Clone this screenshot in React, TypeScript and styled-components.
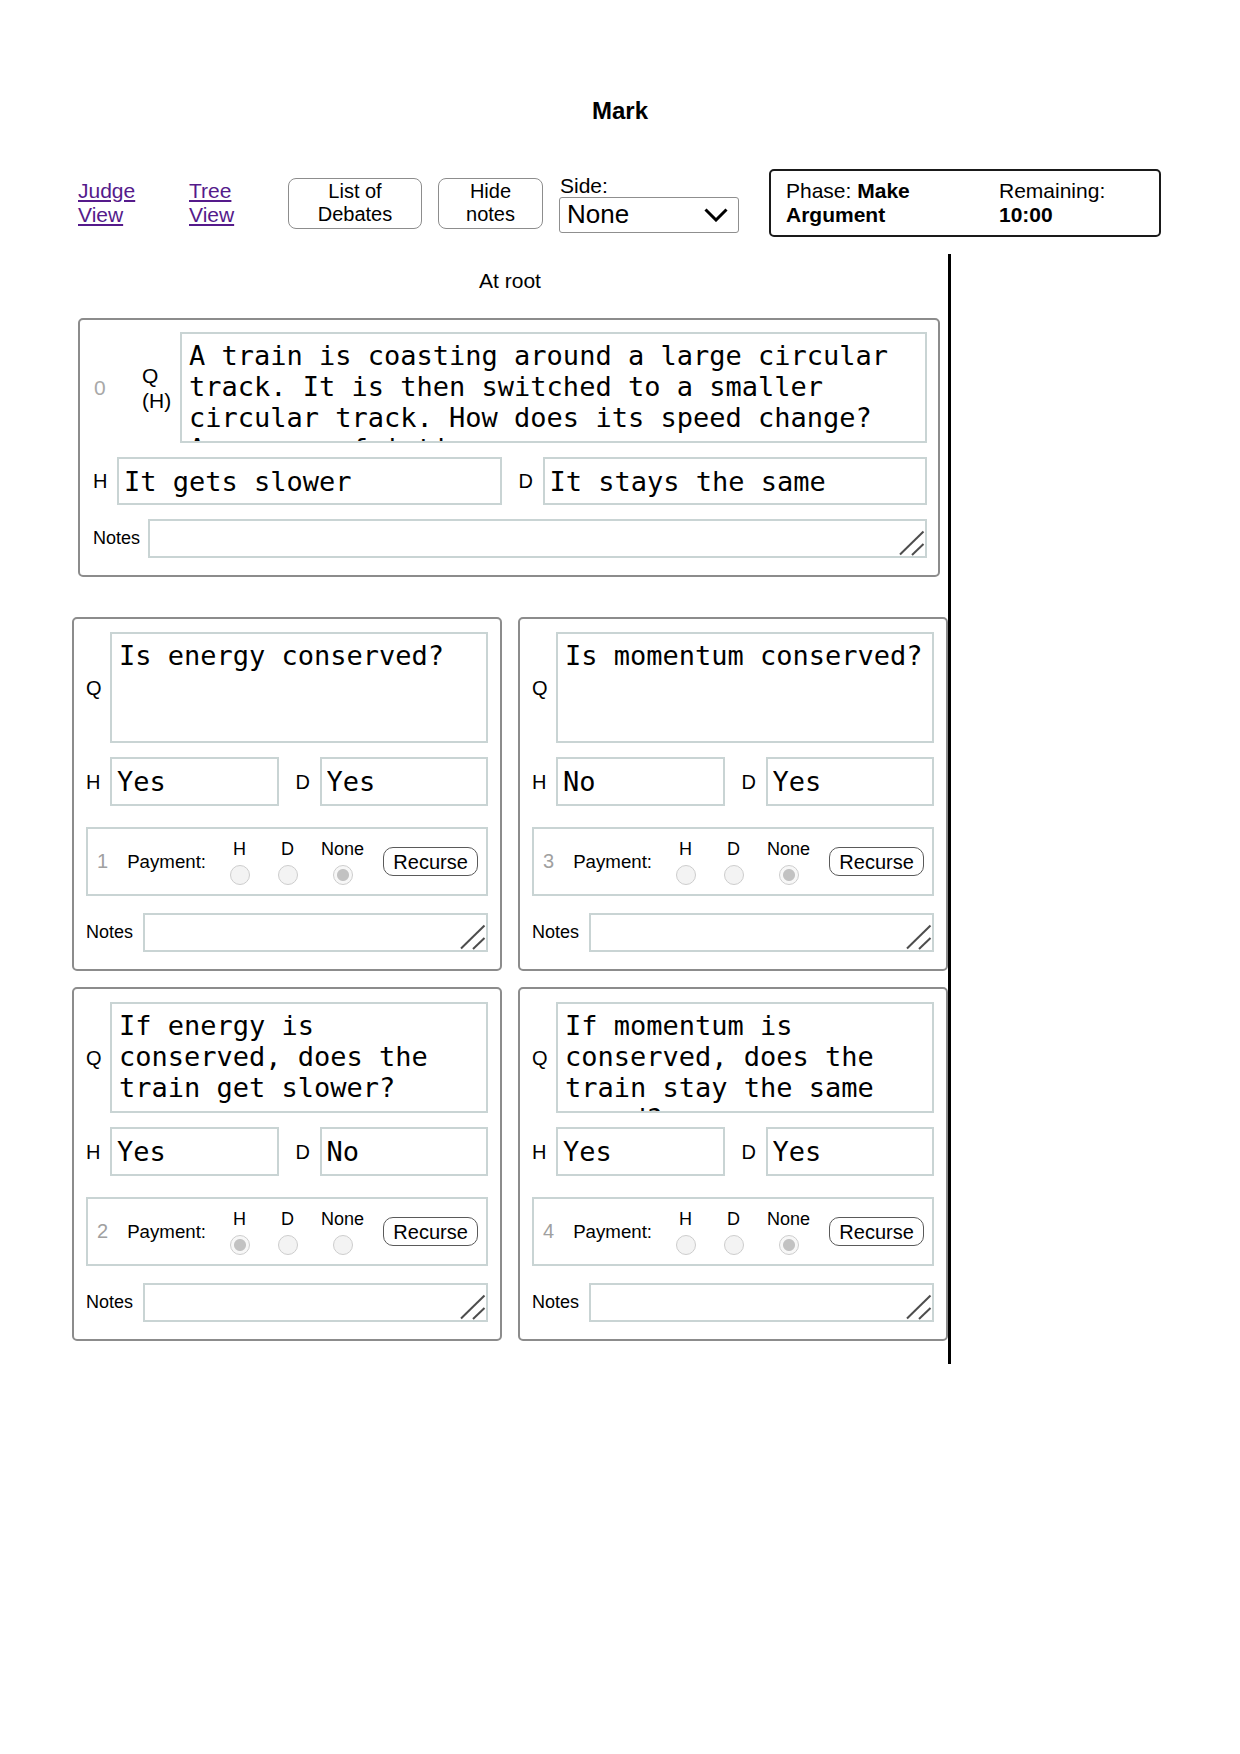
import React from "react";
import styled, { createGlobalStyle } from "styled-components";

const GlobalStyle = createGlobalStyle`
  html, body { margin: 0; padding: 0; background: #fff; }
  body { font-family: "Liberation Sans", Arial, sans-serif; color: #000; }
  * { box-sizing: border-box; }
`;

const Page = styled.div`
  width: 1240px;
  min-height: 1754px;
  padding: 97px 72px 0 72px;
`;

const Title = styled.h2`
  margin: 0;
  text-align: center;
  font-size: 24px;
  line-height: 27px;
  font-weight: bold;
`;

const Header = styled.div`
  display: flex;
  align-items: center;
  gap: 16px;
  height: 68px;
  margin-top: 45px;
  padding-left: 6px;
`;

const NavLink = styled.a<{ $w: number }>`
  display: block;
  width: ${(p) => p.$w}px;
  font-size: 21px;
  line-height: 24px;
  color: #551a8b;
  text-decoration: underline;
  cursor: pointer;
`;

const HeaderButton = styled.button<{ $w: number }>`
  width: ${(p) => p.$w}px;
  height: 51px;
  padding: 0;
  font-family: "Liberation Sans", Arial, sans-serif;
  font-size: 20px;
  line-height: 23px;
  color: #000;
  background: #fff;
  border: 1.5px solid #8d8d8d;
  border-radius: 8px;
`;

const SideBlock = styled.div`
  width: 180px;
  display: flex;
  flex-direction: column;
`;

const SideLabel = styled.div`
  font-size: 21px;
  line-height: 23px;
  padding-left: 1px;
`;

const SelectBox = styled.div`
  height: 36px;
  display: flex;
  align-items: center;
  justify-content: space-between;
  padding: 0 10px 0 7px;
  border: 1px solid #8f8f8f;
  border-radius: 3px;
  font-size: 26px;
  background: #fff;
`;

const PhaseBox = styled.div`
  margin-left: 14px;
  width: 392px;
  height: 68px;
  border: 2px solid #1a1a1a;
  border-radius: 5px;
  padding: 8px 15px;
  display: grid;
  grid-template-columns: 213px 1fr;
  align-content: center;
  font-size: 21px;
  line-height: 24px;
`;

const Main = styled.div`
  display: flex;
  margin-top: 17px;
`;

const LeftPanel = styled.div`
  width: 879px;
  flex-shrink: 0;
  border-right: 3px solid #000;
  padding: 15px 0 23px 0;
`;

const RightPanel = styled.div`
  flex: 1;
`;

const AtRoot = styled.div`
  text-align: center;
  font-size: 21px;
  line-height: 24px;
`;

const RootBox = styled.div`
  margin: 25px 8px 0 6px;
  border: 2px solid #8c8c8c;
  border-radius: 5px;
  padding: 12px 11px 17px 13px;
  display: flex;
  flex-direction: column;
  gap: 14px;
`;

const Grid = styled.div`
  margin-top: 40px;
  display: grid;
  grid-template-columns: repeat(2, minmax(0, 1fr));
  gap: 16px;
`;

const NodeBox = styled.div`
  min-width: 0;
  border: 2px solid #8c8c8c;
  border-radius: 5px;
  padding: 13px 12px 17px 12px;
  display: flex;
  flex-direction: column;
`;

const Row = styled.div<{ $mt?: number; $gap?: number }>`
  display: flex;
  align-items: center;
  gap: ${(p) => p.$gap ?? 8}px;
  margin-top: ${(p) => p.$mt ?? 0}px;
`;

const Half = styled.div`
  flex: 1;
  min-width: 0;
  display: flex;
  align-items: center;
  gap: 8px;
`;

const FieldLabel = styled.div<{ $w?: number }>`
  width: ${(p) => p.$w ?? 16}px;
  flex-shrink: 0;
  font-size: 20px;
  line-height: 22px;
`;

const RootQLabel = styled.div`
  width: 38px;
  flex-shrink: 0;
  font-size: 21px;
  line-height: 25px;
`;

const NotesLabel = styled.div`
  flex-shrink: 0;
  font-size: 18px;
`;

const RootIndex = styled.div`
  width: 49px;
  flex-shrink: 0;
  font-size: 21px;
  color: #a8a8a8;
  padding-left: 1px;
`;

const QuestionArea = styled.textarea`
  flex: 1;
  min-width: 0;
  height: 111px;
  margin: 0;
  padding: 6px 7px;
  border: 2px solid #c9d4d4;
  font-family: "DejaVu Sans Mono", monospace;
  font-size: 27px;
  line-height: normal;
  color: #000;
  background: #fff;
  resize: none;
  overflow: hidden;
  outline: none;
`;

const AnswerInput = styled.input<{ $h: number }>`
  flex: 1;
  min-width: 0;
  height: ${(p) => p.$h}px;
  margin: 0;
  padding: 0 5px;
  border: 2px solid #c9d4d4;
  font-family: "DejaVu Sans Mono", monospace;
  font-size: 27px;
  color: #000;
  background: #fff;
  outline: none;
`;

const NotesWrap = styled.div`
  flex: 1;
  min-width: 0;
  position: relative;
  display: flex;
`;

const NotesArea = styled.textarea`
  flex: 1;
  min-width: 0;
  height: 39px;
  margin: 0;
  padding: 4px 6px;
  border: 2px solid #c9d4d4;
  font-family: "Liberation Sans", Arial, sans-serif;
  font-size: 18px;
  resize: none;
  overflow: hidden;
  outline: none;
  background: #fff;
`;

const Grip = styled.svg`
  position: absolute;
  right: 2px;
  bottom: 2px;
  width: 26px;
  height: 26px;
  pointer-events: none;
`;

const PaymentBox = styled.div`
  flex: 1;
  min-width: 0;
  height: 69px;
  border: 2px solid #c9d4d4;
  display: flex;
  align-items: center;
  gap: 19px;
  padding-left: 9px;
  font-size: 18.7px;
`;

const PayIndex = styled.div`
  font-size: 20px;
  color: #a0a0a0;
`;

const RadioCol = styled.label`
  min-width: 29px;
  display: flex;
  flex-direction: column;
  align-items: center;
  gap: 5px;
  font-size: 18px;
  line-height: 21px;
`;

const Radio = styled.input`
  appearance: none;
  -webkit-appearance: none;
  width: 20px;
  height: 20px;
  margin: 0;
  border-radius: 50%;
  border: 1.5px solid #cdcdcd;
  background: #f3f3f3;
  &:checked {
    background: radial-gradient(circle, #c2c2c2 0 5.5px, #f7f7f7 6.5px);
  }
`;

const RecurseButton = styled.button`
  width: 95px;
  height: 29px;
  flex-shrink: 0;
  padding: 0;
  border: 1.5px solid #5a5a5a;
  border-radius: 10px;
  background: #fff;
  color: #000;
  font-family: "Liberation Sans", Arial, sans-serif;
  font-size: 20px;
  line-height: 22px;
`;

const ResizeGrip = () => (
  <Grip viewBox="0 0 26 26">
    <line x1="1" y1="24.5" x2="24.5" y2="1.5" stroke="#4d4d4d" strokeWidth="2" />
    <line x1="13" y1="25" x2="24.5" y2="14" stroke="#4d4d4d" strokeWidth="2" />
  </Grip>
);

const Notes = () => (
  <NotesWrap>
    <NotesArea readOnly value="" />
    <ResizeGrip />
  </NotesWrap>
);

const Chevron = () => (
  <svg width="24" height="14" viewBox="0 0 24 14">
    <polyline points="1.5,1.5 12,12 22.5,1.5" fill="none" stroke="#000" strokeWidth="3" />
  </svg>
);

type Node = {
  idx: number;
  q: string;
  h: string;
  d: string;
  pay: "H" | "D" | "None";
};

const nodes: Node[] = [
  { idx: 1, q: "Is energy conserved?", h: "Yes", d: "Yes", pay: "None" },
  { idx: 3, q: "Is momentum conserved?", h: "No", d: "Yes", pay: "None" },
  { idx: 2, q: "If energy is conserved, does the train get slower?", h: "Yes", d: "No", pay: "H" },
  { idx: 4, q: "If momentum is conserved, does the train stay the same speed?", h: "Yes", d: "Yes", pay: "None" },
];

const NodeCard = ({ n }: { n: Node }) => (
  <NodeBox>
    <Row>
      <FieldLabel>Q</FieldLabel>
      <QuestionArea readOnly value={n.q} />
    </Row>
    <Row $mt={14} $gap={17}>
      <Half>
        <FieldLabel>H</FieldLabel>
        <AnswerInput $h={49} readOnly value={n.h} />
      </Half>
      <Half>
        <FieldLabel>D</FieldLabel>
        <AnswerInput $h={49} readOnly value={n.d} />
      </Half>
    </Row>
    <Row $mt={21}>
      <PaymentBox>
        <PayIndex>{n.idx}</PayIndex>
        <span>Payment:</span>
        {(["H", "D", "None"] as const).map((opt) => (
          <RadioCol key={opt}>
            {opt}
            <Radio type="radio" name={`pay-${n.idx}`} checked={n.pay === opt} readOnly />
          </RadioCol>
        ))}
        <RecurseButton>Recurse</RecurseButton>
      </PaymentBox>
    </Row>
    <Row $mt={17} $gap={10}>
      <NotesLabel>Notes</NotesLabel>
      <Notes />
    </Row>
  </NodeBox>
);

export default function App() {
  return (
    <>
      <GlobalStyle />
      <Page>
        <Title>Mark</Title>
        <Header>
          <NavLink $w={95}>Judge View</NavLink>
          <NavLink $w={83}>Tree View</NavLink>
          <HeaderButton $w={134}>
            List of
            <br />
            Debates
          </HeaderButton>
          <HeaderButton $w={105}>
            Hide
            <br />
            notes
          </HeaderButton>
          <SideBlock>
            <SideLabel>Side:</SideLabel>
            <SelectBox>
              <span>None</span>
              <Chevron />
            </SelectBox>
          </SideBlock>
          <PhaseBox>
            <div>
              Phase: <b>Make Argument</b>
            </div>
            <div>
              Remaining: <b>10:00</b>
            </div>
          </PhaseBox>
        </Header>
        <Main>
          <LeftPanel>
            <AtRoot>At root</AtRoot>
            <RootBox>
              <Row $gap={0}>
                <RootIndex>0</RootIndex>
                <RootQLabel>
                  Q
                  <br />
                  (H)
                </RootQLabel>
                <QuestionArea
                  readOnly
                  value="A train is coasting around a large circular track. It is then switched to a smaller circular track. How does its speed change? Assume no friction."
                />
              </Row>
              <Row $gap={17}>
                <Half>
                  <FieldLabel>H</FieldLabel>
                  <AnswerInput $h={48} readOnly value="It gets slower" />
                </Half>
                <Half>
                  <FieldLabel>D</FieldLabel>
                  <AnswerInput $h={48} readOnly value="It stays the same" />
                </Half>
              </Row>
              <Row $gap={8}>
                <NotesLabel>Notes</NotesLabel>
                <Notes />
              </Row>
            </RootBox>
            <Grid>
              {nodes.map((n) => (
                <NodeCard key={n.idx} n={n} />
              ))}
            </Grid>
          </LeftPanel>
          <RightPanel />
        </Main>
      </Page>
    </>
  );
}
